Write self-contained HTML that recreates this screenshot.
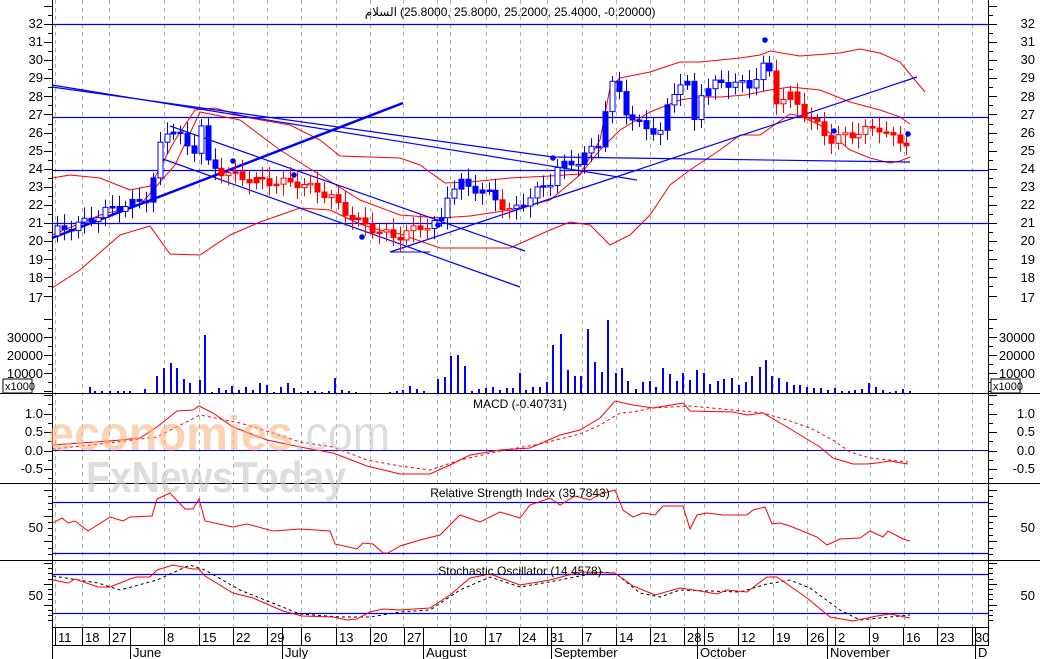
<!DOCTYPE html>
<html><head><meta charset="utf-8"><style>
html,body{margin:0;padding:0;background:#fff;}
svg{display:block;font-family:"Liberation Sans",Arial,sans-serif;}
</style></head><body>
<svg id="s" width="1040" height="659" viewBox="0 0 1040 659" xmlns="http://www.w3.org/2000/svg">
<rect width="1040" height="659" fill="#fff"/>
<g id="grid" stroke="#b0b0b0" stroke-dasharray="4,4" stroke-width="1"></g>
<g id="hl"></g>
<g id="bands" fill="none" stroke="#f00" stroke-width="1"></g>
<g id="tl" stroke="#00f" fill="none"></g>
<g id="cd"></g>
<g id="vol" stroke="#00f" stroke-width="2"></g>
<g id="ind" fill="none"></g>
<g id="ax" stroke="#000" stroke-width="1"></g>
<g font-size="13" fill="#000" text-anchor="end">
<text x="43" y="28">32</text><text x="43" y="46">31</text><text x="43" y="64">30</text><text x="43" y="82">29</text><text x="43" y="101">28</text><text x="43" y="119">27</text><text x="43" y="137">26</text><text x="43" y="155">25</text><text x="43" y="173">24</text><text x="43" y="191">23</text><text x="43" y="209">22</text><text x="43" y="227">21</text><text x="43" y="245">20</text><text x="43" y="264">19</text><text x="43" y="282">18</text><text x="43" y="302">17</text>
<text x="1035" y="28">32</text><text x="1035" y="46">31</text><text x="1035" y="64">30</text><text x="1035" y="82">29</text><text x="1035" y="101">28</text><text x="1035" y="119">27</text><text x="1035" y="137">26</text><text x="1035" y="155">25</text><text x="1035" y="173">24</text><text x="1035" y="191">23</text><text x="1035" y="209">22</text><text x="1035" y="227">21</text><text x="1035" y="245">20</text><text x="1035" y="264">19</text><text x="1035" y="282">18</text><text x="1035" y="302">17</text>
<text x="43" y="342">30000</text><text x="43" y="360">20000</text><text x="43" y="378">10000</text>
<text x="1035" y="342">30000</text><text x="1035" y="360">20000</text><text x="1035" y="378">10000</text>
<text x="43" y="418">1.0</text><text x="43" y="436">0.5</text><text x="43" y="455">0.0</text><text x="43" y="473">-0.5</text>
<text x="1035" y="418">1.0</text><text x="1035" y="436">0.5</text><text x="1035" y="455">0.0</text><text x="1035" y="473">-0.5</text>
<text x="43" y="532">50</text><text x="1035" y="532">50</text>
<text x="43" y="600">50</text><text x="1035" y="600">50</text>
</g>
<rect x="3" y="379" width="29" height="14" fill="#fff" stroke="#000"/>
<text x="5" y="390" font-size="11">x1000</text>
<rect x="991" y="379" width="29" height="14" fill="#fff" stroke="#000"/>
<text x="993" y="390" font-size="11">x1000</text>
<text x="397" y="16" font-size="12" text-anchor="end" font-family="'Liberation Sans','DejaVu Sans',sans-serif">السلام</text>
<text x="400" y="16" font-size="12" direction="ltr">(25.8000, 25.8000, 25.2000, 25.4000, -0.20000)</text>
<text x="520" y="408" font-size="12" text-anchor="middle">MACD (-0.40731)</text>
<text x="520" y="497" font-size="12" text-anchor="middle">Relative Strength Index (39.7843)</text>
<text x="520" y="575" font-size="12" text-anchor="middle">Stochastic Oscillator (14.4578)</text>
<g id="dates" font-size="13"></g>
<g opacity="0.6">
<text x="48" y="450" font-size="48" font-weight="bold" fill="#fcb685" textLength="245" lengthAdjust="spacingAndGlyphs">economies</text>
<text x="293" y="450" font-size="48" fill="#c8c8c8" textLength="97" lengthAdjust="spacingAndGlyphs">.com</text>
<text x="86" y="492" font-size="44" font-weight="bold" fill="#c8c8c8" textLength="260" lengthAdjust="spacingAndGlyphs">FxNewsToday</text>
</g>
</svg>
<script>
var NS="http://www.w3.org/2000/svg";
function el(g,tag,a){var e=document.createElementNS(NS,tag);for(var k in a)e.setAttribute(k,a[k]);document.getElementById(g).appendChild(e);return e;}
function pl(g,pts,a){a.points=pts.map(function(p){return p.join(",")}).join(" ");el(g,"polyline",a);}
function py(p){return 24+(32-p)*18.1;}
[55,82,109,164,199,233,267,301,336,370,403,437,450,486,520,547,582,616,650,684,704,738,773,807,835,870,904,938,972].forEach(function(x){el("grid","line",{x1:x+.5,y1:0,x2:x+.5,y2:627});});
[24,117,170,223].forEach(function(y){el("hl","line",{x1:52,y1:y+.5,x2:989,y2:y+.5,stroke:"#00f","stroke-width":1.3});});
el("hl","line",{x1:52,y1:450.5,x2:989,y2:450.5,stroke:"#00f"});
[502,553,574,613].forEach(function(y){el("hl","line",{x1:52,y1:y+.5,x2:989,y2:y+.5,stroke:"#00f","stroke-width":1.3});});
pl("bands",[[52,178],[70,175],[100,178],[130,190],[150,186],[175,140],[195,110],[215,108],[250,118],[290,125],[320,140],[340,156],[400,158],[420,165],[445,183],[470,182],[510,178],[550,176],[580,174],[600,140],[610,88],[620,78],[650,72],[680,62],[700,62],[740,58],[760,55],[770,51],[800,56],[840,53],[860,49],[880,53],[900,62],[915,80],[925,92]],{});
pl("bands",[[52,235],[100,215],[140,205],[175,165],[200,112],[240,120],[280,150],[320,175],[360,200],[400,215],[440,218],[470,216],[510,210],[550,200],[580,175],[600,150],[620,130],[650,112],[680,100],[700,97],[720,97],[745,95],[770,90],[790,87],[820,90],[850,102],[880,110],[900,117],[910,124]],{});
pl("bands",[[52,288],[80,270],[120,235],[150,226],[170,254],[200,255],[230,235],[260,222],[300,208],[330,210],[360,224],[380,230],[400,234],[440,248],[470,248],[510,248],[550,230],[570,222],[590,225],[610,245],[630,235],[650,215],[670,185],[690,170],[720,150],[740,135],[760,135],[790,114],[800,116],[820,125],[850,150],[870,158],[890,163],[900,161],[910,157]],{});
el("tl","line",{x1:52,y1:238,x2:403,y2:103,"stroke-width":2.5});
el("tl","line",{x1:52,y1:85,x2:637,y2:180,"stroke-width":1.2});
pl("tl",[[52,87],[553,157],[910,162]],{"stroke-width":1.2});
el("tl","line",{x1:170,y1:126,x2:525,y2:251,"stroke-width":1.2});
el("tl","line",{x1:163,y1:159,x2:520,y2:287,"stroke-width":1.2});
pl("tl",[[390,252],[430,252]],{"stroke-width":1});
el("tl","line",{x1:390,y1:252,x2:917,y2:77,"stroke-width":1.2});
var K=[[57,20.6],[82,21],[110,21.8],[130,22],[150,22.5],[158,25],[165,26],[172,26.3],[180,25.8],[186,25.2],[193,24.8],[200,26.8],[206,24.3],[215,24],[235,23.6],[260,23.3],[300,23.2],[330,22.5],[340,21.8],[360,21],[380,20.5],[395,20.2],[420,20.8],[440,21],[445,22.5],[460,23.2],[480,22.8],[500,22.3],[505,21.5],[515,21.8],[530,22.5],[550,23.3],[555,24],[580,24.5],[600,25.5],[607,28],[615,29],[622,27.5],[635,26.5],[660,26],[670,28],[680,28.8],[688,28.6],[692,25.8],[698,28.2],[720,28.8],[750,28.6],[760,29.5],[767,29.9],[775,27.8],[790,28],[805,27],[815,26.5],[830,25.6],[850,25.9],[880,26.3],[895,25.5],[910,25.5]];
function interp(x){for(var i=0;i<K.length-1;i++){if(x<=K[i+1][0]){var t=(x-K[i][0])/(K[i+1][0]-K[i][0]);return K[i][1]+t*(K[i+1][1]-K[i][1]);}}return K[K.length-1][1];}
var prev=20.3,n=0;
for(var x=57;x<=911;x+=6.85){n++;var c=interp(x)+Math.sin(n*1.7)*0.25;var o=prev;var hi=Math.max(o,c)+0.25+Math.abs(Math.sin(n*2.3))*0.4,lo=Math.min(o,c)-0.25-Math.abs(Math.cos(n*1.3))*0.4;
var col=(x<215||(x>428&&x<500)||(x>512&&x<770))?"#00f":"#f00";
var cx=Math.round(x);
el("cd","line",{x1:cx+.5,y1:py(hi),x2:cx+.5,y2:py(lo),stroke:col});
var yt=py(Math.max(o,c)),yb=py(Math.min(o,c));if(yb-yt<1.5)yb=yt+1.5;
var fill=(c<o||n%3==0)?col:"#fff";
el("cd","rect",{x:cx-2,y:yt,width:5,height:yb-yt,fill:fill,stroke:col});
prev=c;}
[[233,161],[294,175],[362,237],[438,225],[553,158],[765,40],[834,131],[908,134]].forEach(function(d){el("cd","circle",{cx:d[0],cy:d[1],r:2.8,fill:"#00f"});});
var V=[[90,6],[95,2],[102,2],[110,2],[118,2],[124,2],[130,2],[145,4],[157,17],[164,25],[171,30],[177,25],[184,14],[190,10],[200,13],[205,58],[212,1],[219,5],[226,3],[232,7],[239,3],[246,6],[253,3],[260,10],[267,8],[274,1],[281,6],[288,10],[294,5],[301,1],[308,2],[315,2],[322,1],[329,2],[335,15],[342,3],[349,2],[356,1],[390,1],[397,2],[403,3],[410,7],[417,4],[424,2],[438,14],[445,16],[451,37],[458,38],[465,27],[472,2],[479,4],[486,5],[493,6],[500,3],[507,5],[513,5],[520,20],[526,3],[533,6],[540,6],[547,11],[553,48],[561,59],[568,23],[575,17],[581,17],[588,64],[595,31],[602,21],[608,73],[616,20],[622,25],[628,12],[636,4],[643,11],[650,12],[656,6],[663,25],[670,19],[677,12],[683,20],[690,13],[697,23],[704,20],[710,9],[718,12],[724,14],[732,15],[739,8],[746,11],[752,17],[760,26],[766,33],[772,17],[779,15],[787,11],[794,8],[800,8],[807,6],[814,5],[821,5],[828,3],[835,5],[842,2],[849,2],[855,3],[862,4],[869,10],[876,6],[883,3],[890,1],[896,2],[903,4],[910,2]];
V.forEach(function(v){el("vol","line",{x1:v[0],y1:393,x2:v[0],y2:393-v[1]});});
pl("ind",[[52,445],[80,443],[110,441],[140,438],[157,427],[177,411],[193,410],[199,406],[213,413],[233,427],[267,440],[300,447],[333,453],[367,466],[400,474],[430,474],[450,465],[470,455],[500,450],[530,448],[560,435],[580,430],[600,418],[615,401],[633,405],[653,408],[683,403],[690,411],[733,412],[747,415],[763,413],[787,427],[820,447],[833,458],[853,464],[867,464],[877,463],[890,461],[908,464]],{stroke:"#f00"});
pl("ind",[[52,449],[100,444],[157,437],[200,415],[240,423],[270,432],[300,442],[333,447],[367,460],[400,466],[430,470],[460,460],[500,451],[540,444],[580,434],[600,425],[620,413],[633,412],[653,408],[690,406],[733,410],[763,413],[787,420],[810,428],[833,440],[850,452],[870,458],[908,462]],{stroke:"#f00","stroke-dasharray":"3,3"});
pl("ind",[[53,523],[62,518],[68,523],[75,521],[88,531],[110,517],[123,521],[130,517],[152,516],[157,499],[170,493],[185,509],[193,509],[199,499],[205,521],[233,527],[247,524],[273,531],[300,529],[330,531],[335,544],[357,549],[363,543],[373,544],[383,553],[388,553],[400,546],[420,540],[440,535],[460,515],[480,522],[500,512],[520,518],[530,505],[550,498],[560,505],[575,496],[590,500],[600,494],[615,490],[623,510],[633,517],[643,513],[655,515],[663,506],[683,506],[690,529],[697,515],[707,513],[723,515],[747,515],[753,510],[765,507],[772,524],[780,523],[790,526],[817,537],[827,545],[840,539],[860,538],[870,531],[883,537],[888,531],[903,539],[910,541]],{stroke:"#f00"});
pl("ind",[[53,576],[98,583],[120,590],[157,580],[190,565],[205,570],[240,590],[270,602],[300,614],[340,617],[370,617],[400,612],[430,610],[460,590],[490,577],[520,587],[560,580],[600,572],[615,573],[640,593],[660,597],[680,590],[740,592],[767,584],[790,580],[810,588],[840,610],[860,620],[890,617],[910,615]],{stroke:"#000","stroke-dasharray":"3,3"});
pl("ind",[[53,580],[68,583],[75,579],[98,587],[110,587],[130,579],[137,577],[150,577],[157,570],[173,565],[193,569],[199,569],[205,576],[233,593],[253,598],[283,611],[302,616],[333,617],[347,620],[357,619],[370,612],[383,609],[400,610],[430,608],[450,595],[470,578],[490,574],[520,585],[550,580],[580,572],[615,573],[633,586],[655,595],[680,588],[700,591],[717,594],[727,590],[747,592],[767,577],[777,577],[807,598],[830,617],[853,621],[877,616],[890,614],[910,618]],{stroke:"#f00"});
el("ax","line",{x1:52.5,y1:0,x2:52.5,y2:659});
el("ax","line",{x1:988.5,y1:0,x2:988.5,y2:645});
[393,483,560].forEach(function(y){el("ax","line",{x1:0,y1:y+.5,x2:1040,y2:y+.5});});
el("ax","line",{x1:52,y1:627.5,x2:989,y2:627.5});
el("ax","line",{x1:52,y1:645.5,x2:989,y2:645.5});
function ticks(y0,y1,step,big){for(var y=y0;y<=y1;y+=step){var L=((Math.round((y-y0)/step))%big==0)?8:4;el("ax","line",{x1:52-L,y1:Math.round(y)+.5,x2:52,y2:Math.round(y)+.5});el("ax","line",{x1:989,y1:Math.round(y)+.5,x2:989+L,y2:Math.round(y)+.5});}}
ticks(5.9,300,9.05,2);
ticks(319,393,9,2);
ticks(395,480,9.25,2);
ticks(490,557,6.4,4);
ticks(563,625,5.2,4);
var D=[[55,"11"],[82,"18"],[109,"27"],[164,"8"],[199,"15"],[233,"22"],[267,"29"],[301,"6"],[336,"13"],[370,"20"],[404,"27"],[450,"10"],[485,"17"],[519,"24"],[547,"31"],[582,"7"],[616,"14"],[650,"21"],[684,"28"],[704,"5"],[738,"12"],[773,"19"],[807,"26"],[835,"2"],[869,"9"],[903,"16"],[937,"23"],[972,"30"]];
D.forEach(function(d){el("ax","line",{x1:d[0]+.5,y1:627,x2:d[0]+.5,y2:645});var t=el("dates","text",{x:d[0]+3,y:642});t.textContent=d[1];});
var M=[[130,"June"],[282,"July"],[423,"August"],[551,"September"],[697,"October"],[827,"November"],[975,"D"]];
M.forEach(function(d){el("ax","line",{x1:d[0]+.5,y1:627,x2:d[0]+.5,y2:659});var t=el("dates","text",{x:d[0]+3,y:657});t.textContent=d[1];});
</script>
</body></html>
